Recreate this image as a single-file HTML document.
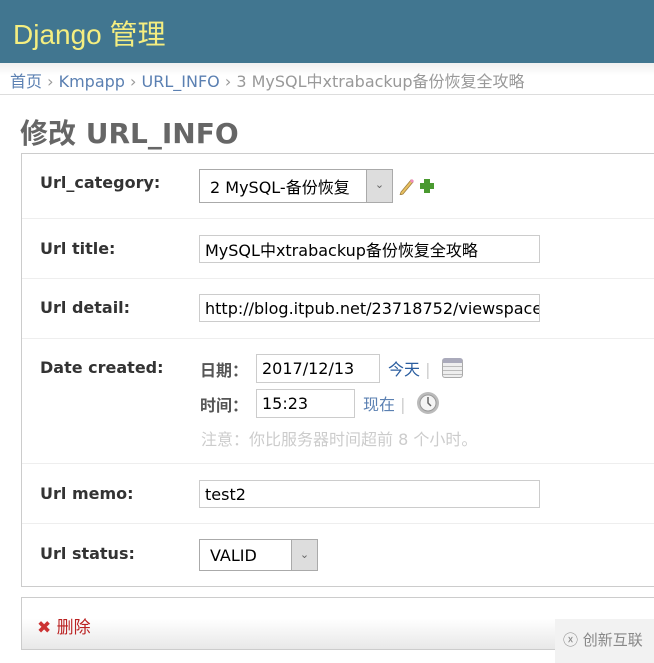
<!DOCTYPE html>
<html><head><meta charset="utf-8"><style>
*{margin:0;padding:0;box-sizing:border-box}
body{width:654px;height:663px;overflow:hidden;background:#fff;font-family:"DejaVu Sans","Noto Sans CJK SC",sans-serif;color:#333;position:relative}
.hdr{position:absolute;left:0;top:0;width:654px;height:63px;background:#417690;color:#f5ee80;font-size:28px;padding:13px 0 0 13px;font-family:"Liberation Sans","Noto Sans CJK SC",sans-serif}
.bc{position:absolute;left:0;top:63px;width:654px;height:32px;background:linear-gradient(#f0f0f0,#fff 40%);border-bottom:1px solid #ddd;font-size:16px;color:#999;padding:5px 0 0 10px;white-space:nowrap}
.bc a{color:#5b80b2;text-decoration:none}
h1{position:absolute;left:20px;top:112px;font-size:28px;color:#666;font-weight:bold}
.fs{position:absolute;left:21px;top:153px;width:640px;height:434px;border:1px solid #ccc;border-right:none}
.row{position:absolute;left:0;width:640px;border-bottom:1px solid #eee}
.lbl{position:absolute;left:18px;font-weight:bold;font-size:16px;color:#333}
.inp{position:absolute;border:1px solid #ccc;background:#fff;font-size:16px;color:#000;padding:0 5px;white-space:nowrap;overflow:hidden;display:flex;align-items:center}
.sel{position:absolute;border:1px solid #aaa;background:#fff;font-size:16px;padding:0 10px;color:#000;display:flex;align-items:center}
.sel .ar{position:absolute;right:0;top:0;width:26px;height:100%;background:#ddd;border-left:1px solid #aaa;color:#666;font-size:11px;text-align:center;line-height:30px}
.sub{position:absolute;left:21px;top:597px;width:640px;height:53px;border:1px solid #ccc;border-right:none;background:linear-gradient(#fff 40%,#e8e8e8)}
</style></head><body>
<div class="hdr">Django 管理</div>
<div class="bc"><a>首页</a> › <a>Kmpapp</a> › <a>URL_INFO</a> › 3 MySQL中xtrabackup备份恢复全攻略</div>
<h1>修改 URL_INFO</h1>
<div class="fs">
 <div class="row" style="top:0;height:65px">
  <div class="lbl" style="top:19px">Url_category:</div>
  <div class="sel" style="left:177px;top:15px;width:194px;height:34px">2 MySQL-备份恢复<div class="ar">&#8964;</div></div>
  <svg style="position:absolute;left:376px;top:23px" width="16" height="18" viewBox="0 0 16 18"><path d="M3 15 L13 3 L15 5 L5 17 L2 18Z" fill="#e8c060" stroke="#a08040" stroke-width=".8"/><path d="M12 4 L14 2 L16 4 L14 6Z" fill="#f08cc0"/></svg>
  <svg style="position:absolute;left:397px;top:24px" width="16" height="16" viewBox="0 0 16 16"><path d="M5 1h6v4h4v6h-4v4H5v-4H1V5h4z" fill="#4a9a30"/></svg>
 </div>
 <div class="row" style="top:65px;height:60px">
  <div class="lbl" style="top:20px">Url title:</div>
  <div class="inp" style="left:177px;top:16px;width:341px;height:28px">MySQL中xtrabackup备份恢复全攻略</div>
 </div>
 <div class="row" style="top:125px;height:60px">
  <div class="lbl" style="top:19px">Url detail:</div>
  <div class="inp" style="left:177px;top:15px;width:341px;height:28px">http://blog.itpub.net/23718752/viewspace</div>
 </div>
 <div class="row" style="top:185px;height:125px">
  <div class="lbl" style="top:19px">Date created:</div>
  <div style="position:absolute;left:178px;top:18px;font-weight:bold;font-size:16px;color:#555">日期：</div>
  <div class="inp" style="left:234px;top:15px;width:124px;height:29px">2017/12/13</div>
  <div style="position:absolute;left:366px;top:17px;font-size:16px;color:#2a5d9f">今天 <span style="color:#ccc">|</span></div>
  <div style="position:absolute;left:420px;top:19px;width:21px;height:20px;border:1px solid #aaa;border-radius:3px;background:repeating-linear-gradient(#eee 0 3px,#bbb 3px 4px);border-top:5px solid #aab"></div>
  <div style="position:absolute;left:178px;top:53px;font-weight:bold;font-size:16px;color:#555">时间：</div>
  <div class="inp" style="left:234px;top:50px;width:99px;height:29px">15:23</div>
  <div style="position:absolute;left:341px;top:52px;font-size:16px;color:#5b80b2">现在 <span style="color:#ccc">|</span></div>
  <svg style="position:absolute;left:394px;top:52px" width="24" height="24" viewBox="0 0 24 24"><circle cx="12" cy="12" r="11" fill="#bbb"/><circle cx="12" cy="12" r="8" fill="#f4f4f4" stroke="#999"/><path d="M12 6v6l3 3" stroke="#666" stroke-width="1.5" fill="none"/></svg>
  <div style="position:absolute;left:179px;top:87px;font-size:16px;color:#ccc">注意：你比服务器时间超前 8 个小时。</div>
 </div>
 <div class="row" style="top:310px;height:60px">
  <div class="lbl" style="top:20px">Url memo:</div>
  <div class="inp" style="left:177px;top:16px;width:341px;height:28px">test2</div>
 </div>
 <div class="row" style="top:370px;height:63px;border:none">
  <div class="lbl" style="top:20px">Url status:</div>
  <div class="sel" style="left:177px;top:15px;width:119px;height:32px">VALID<div class="ar">&#8964;</div></div>
 </div>
</div>
<div class="sub">
 <div style="position:absolute;left:15px;top:15px;font-size:17px;color:#ba2121"><span style="color:#c33;font-weight:bold">✖</span> 删除</div>
</div>
<div style="position:absolute;left:555px;top:619px;width:99px;height:44px;background:#f2f2f2;color:#888;font-size:15px;padding:10px 0 0 8px">ⓧ 创新互联</div>
</body></html>
